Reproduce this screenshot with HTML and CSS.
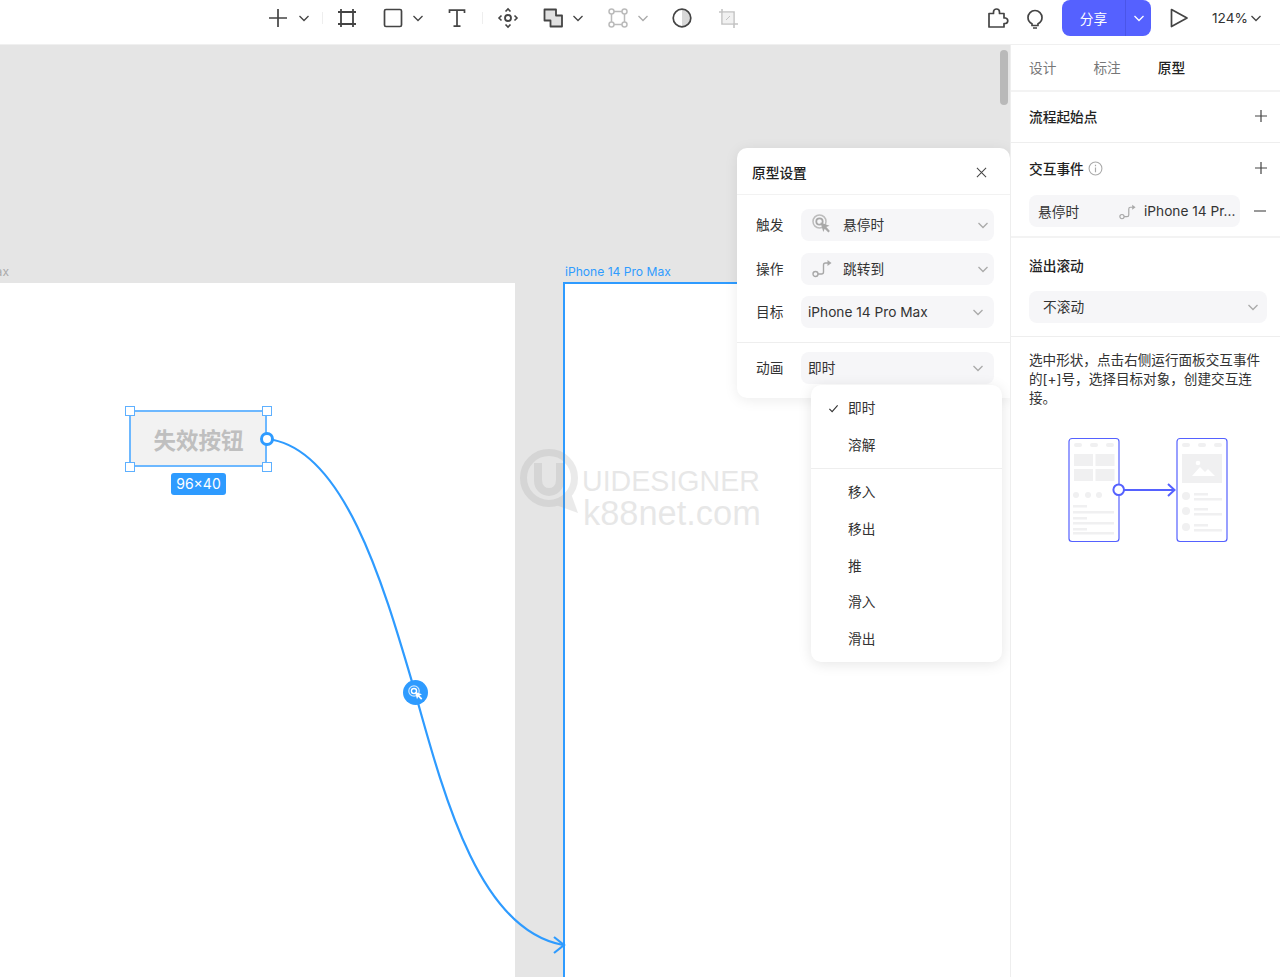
FILE: index.html
```html
<!DOCTYPE html>
<html lang="zh-CN">
<head>
<meta charset="utf-8">
<title>原型设置</title>
<link rel="stylesheet" href="styles.css">
</head>
<body>
<svg class="defs" width="0" height="0" aria-hidden="true">
  <symbol id="chev" viewBox="0 0 12 12"><path d="M1.5 4l4.5 4.5L10.500 4" fill="none" stroke="currentColor" stroke-width="1.300"/></symbol>
  <symbol id="hover" viewBox="0 0 20 20"><circle cx="7.500" cy="7.500" r="6.500" fill="none" stroke="currentColor" stroke-width="1.500" opacity=".75"/><circle cx="7.500" cy="7.500" r="3.200" fill="none" stroke="currentColor" stroke-width="1.800"/><path d="M8.500 8.500l9 3.200-3.200 1.400 3.600 3.800-1.500 1.500-3.700-3.700-1.400 3.200z" fill="currentColor"/></symbol>
  <symbol id="jump" viewBox="0 0 20 20"><circle cx="3.500" cy="16" r="2.500" fill="none" stroke="currentColor" stroke-width="1.400"/><path d="M6 16h3.500c1.500 0 2-.8 2-2V7c0-1.200.6-2 2-2H16" fill="none" stroke="currentColor" stroke-width="1.400"/><path d="M15.500 2l4 3-4 3z" fill="currentColor"/></symbol>
</svg>

<header class="topbar">
  <div class="tools">
    <svg class="ico plus" viewBox="0 0 24 24"><path d="M12 3v18M3 12h18" fill="none" stroke="#444" stroke-width="1.700"/></svg>
    <svg class="chev c-a"><use href="#chev"/></svg>
    <i class="sep s-a"></i>
    <svg class="ico frame" viewBox="0 0 24 24"><path d="M6 3v18M18 3v18M3 6h18M3 18h18" fill="none" stroke="#444" stroke-width="1.800"/></svg>
    <svg class="ico rect" viewBox="0 0 24 24"><rect x="3.500" y="3.500" width="17" height="17" rx="1.500" fill="none" stroke="#444" stroke-width="1.700"/></svg>
    <svg class="chev c-b"><use href="#chev"/></svg>
    <svg class="ico type" viewBox="0 0 24 24"><path d="M4.500 7V4.200h15V7M12 4.200v16M8.500 20.200h7" fill="none" stroke="#444" stroke-width="1.700"/></svg>
    <i class="sep s-b"></i>
    <svg class="ico comp" viewBox="0 0 24 24"><circle cx="12" cy="12" r="3" fill="none" stroke="#444" stroke-width="1.800"/><path d="M9.500 5.500L12 3l2.500 2.500M9.500 18.500L12 21l2.500-2.500M5.500 9.500L3 12l2.500 2.500M18.500 9.500L21 12l-2.500 2.500" fill="none" stroke="#444" stroke-width="1.600"/></svg>
    <svg class="ico shape" viewBox="0 0 24 24"><path d="M3.500 3.500h11.500v6h6v11h-11.500v-6h-6z" fill="#e0e0e0" stroke="#444" stroke-width="1.800" stroke-linejoin="round"/></svg>
    <svg class="chev c-c"><use href="#chev"/></svg>
    <svg class="ico bool" viewBox="0 0 24 24"><path d="M6 5.500h12M6 18.500h12M5.500 6v12M18.500 6v12" fill="none" stroke="#bbb" stroke-width="1.500"/><g fill="#fff" stroke="#bbb" stroke-width="1.500"><circle cx="5.500" cy="5.500" r="2.500"/><circle cx="18.500" cy="5.500" r="2.500"/><circle cx="5.500" cy="18.500" r="2.500"/><circle cx="18.500" cy="18.500" r="2.500"/></g></svg>
    <svg class="chev c-d dim"><use href="#chev"/></svg>
    <svg class="ico contrast" viewBox="0 0 24 24"><path d="M12 3a9 9 0 0 1 0 18z" fill="#d8d8d8"/><circle cx="12" cy="12" r="8.800" fill="none" stroke="#444" stroke-width="1.700"/></svg>
    <svg class="ico crop" viewBox="0 0 24 24"><path d="M6 3v15h16M3 6h15v16" fill="none" stroke="#c4c4c4" stroke-width="1.600"/><path d="M6.800 6.800h10.400v10.400H6.800z" fill="#f1f1f1"/><path d="M10 14l4-4" stroke="#c4c4c4" stroke-width="1"/></svg>
  </div>
  <div class="actions">
    <svg class="ico puzzle" viewBox="0 0 24 24"><path d="M4 7.500h4.500V6a3 3 0 0 1 6 0v1.500H19v4.500h1.500a2.800 2.800 0 0 1 0 5.500H19V21H4z" fill="none" stroke="#444" stroke-width="1.700" stroke-linejoin="round"/></svg>
    <svg class="ico bulb" viewBox="0 0 24 24"><path d="M9 19.500v-1.800c-2.500-1.300-4-3.600-4-6.200a7 7 0 0 1 14 0c0 2.600-1.500 4.900-4 6.200v1.800zM10 22h4" fill="none" stroke="#444" stroke-width="1.700" stroke-linejoin="round"/></svg>
    <div class="share"><span class="share-text">分享</span><span class="share-arrow"><svg class="chev white"><use href="#chev"/></svg></span></div>
    <svg class="ico play" viewBox="0 0 24 24"><path d="M5.500 3.500L21 12 5.500 20.500z" fill="none" stroke="#444" stroke-width="1.700" stroke-linejoin="round"/></svg>
    <span class="zoom-val">124%</span>
    <svg class="chev c-z"><use href="#chev"/></svg>
  </div>
</header>

<main class="body">
  <section class="canvas">
    <div class="art art-left"></div>
    <div class="art art-right"></div>
    <span class="art-name name-left">iPhone 14 Pro Max</span>
    <span class="art-name name-right">iPhone 14 Pro Max</span>

    <div class="watermark">
      <svg class="wm-logo" viewBox="0 0 66 66"><circle cx="30" cy="30" r="25.500" fill="none" stroke="#888" stroke-width="7"/><path d="M19 15v17c0 16 22 16 22 0V15" fill="none" stroke="#888" stroke-width="8"/><path d="M50 40l9 25-22-8z" fill="#888"/></svg>
      <div class="wm-text"><span class="wm-a">UIDESIGNER</span><span class="wm-b">k88net.com</span></div>
    </div>

    <svg class="wires" viewBox="0 0 1010 932" width="1010" height="932">
      <path d="M267 394C345 402 385 545 415 647C445 755 480 885 563 900" fill="none" stroke="#2e9bff" stroke-width="2.200"/>
      <path d="M554 892l10 8-10 8" fill="none" stroke="#2e9bff" stroke-width="2.200"/>
    </svg>

    <div class="selected"><span>失效按钮</span></div>
    <i class="handle h-tl"></i><i class="handle h-tr"></i><i class="handle h-bl"></i><i class="handle h-br"></i>
    <i class="port"></i>
    <div class="size">96×40</div>
    <div class="node"><svg class="node-ico"><use href="#hover"/></svg></div>
    <div class="scroll"></div>

    <div class="popup">
      <div class="pop-head"><b>原型设置</b>
        <svg class="close" viewBox="0 0 12 12"><path d="M1 1l10 10M11 1L1 11" stroke="#444" stroke-width="1.100" fill="none"/></svg>
      </div>
      <div class="pop-sec">
        <div class="row"><label>触发</label><div class="sel"><svg class="sel-ico"><use href="#hover"/></svg><span class="tx">悬停时</span><svg class="chev dim end-a"><use href="#chev"/></svg></div></div>
        <div class="row"><label>操作</label><div class="sel"><svg class="sel-ico"><use href="#jump"/></svg><span class="tx">跳转到</span><svg class="chev dim end-a"><use href="#chev"/></svg></div></div>
        <div class="row"><label>目标</label><div class="sel plain"><span>iPhone 14 Pro Max</span><svg class="chev dim end-b"><use href="#chev"/></svg></div></div>
      </div>
      <div class="pop-sec last">
        <div class="row"><label>动画</label><div class="sel plain"><span class="tx">即时</span><svg class="chev dim end-b"><use href="#chev"/></svg></div></div>
      </div>
    </div>

    <div class="menu">
      <div class="item"><svg class="check" viewBox="0 0 12 12"><path d="M1.500 6.500l3 3 6-7" fill="none" stroke="#333" stroke-width="1.200"/></svg>即时</div>
      <div class="item">溶解</div>
      <hr class="menu-line">
      <div class="item">移入</div>
      <div class="item">移出</div>
      <div class="item">推</div>
      <div class="item">滑入</div>
      <div class="item">滑出</div>
    </div>
  </section>

  <aside class="panel">
    <nav class="tabs"><span>设计</span><span>标注</span><span class="on">原型</span></nav>
    <div class="sec sec-flow">
      <h3>流程起始点</h3>
      <svg class="add" viewBox="0 0 12 12"><path d="M6 0v12M0 6h12" stroke="#444" stroke-width="1.200"/></svg>
    </div>
    <div class="sec-events">
      <div class="sec-top">
        <h3>交互事件</h3>
        <svg class="info" viewBox="0 0 14 14"><circle cx="7" cy="7" r="6" fill="none" stroke="#aaa"/><path d="M7 6v4.500M7 3.500v1.300" stroke="#aaa" stroke-width="1.100"/></svg>
        <svg class="add" viewBox="0 0 12 12"><path d="M6 0v12M0 6h12" stroke="#444" stroke-width="1.200"/></svg>
      </div>
      <div class="event-row">
        <div class="event"><span class="ev-name">悬停时</span><svg class="ev-ico"><use href="#jump"/></svg><span class="ev-target">iPhone 14 Pr...</span></div>
        <svg class="minus" viewBox="0 0 12 2"><path d="M0 1h12" stroke="#555" stroke-width="1.200"/></svg>
      </div>
    </div>
    <div class="sec-overflow">
      <h3>溢出滚动</h3>
      <div class="over-sel"><span class="tx">不滚动</span><svg class="chev dim"><use href="#chev"/></svg></div>
    </div>
    <p class="help">选中形状，点击右侧运行面板交互事件的[+]号，选择目标对象，创建交互连接。</p>
    <svg class="illus" viewBox="0 0 180 120" width="180" height="120">
      <g fill="#f0f0f1">
        <rect x="14" y="13" width="8" height="4" rx="2"/><rect x="30" y="13" width="8" height="4" rx="2"/><rect x="46" y="13" width="8" height="4" rx="2"/>
        <rect x="14" y="24" width="19" height="12"/><rect x="35.500" y="24" width="19" height="12"/><rect x="14" y="39" width="19" height="12"/><rect x="35.500" y="39" width="19" height="12"/>
        <circle cx="16" cy="65" r="3"/><circle cx="28" cy="65" r="3"/><circle cx="39" cy="65" r="3"/>
        <rect x="13" y="75" width="14" height="2.500"/><rect x="13" y="81" width="41" height="2.500"/><rect x="13" y="87" width="14" height="2.500"/><rect x="13" y="92" width="41" height="2.500"/><rect x="13" y="98" width="14" height="2.500"/><rect x="13" y="102" width="41" height="2.500"/>
        <rect x="122" y="13" width="8" height="4" rx="2"/><rect x="138" y="13" width="8" height="4" rx="2"/><rect x="154" y="13" width="8" height="4" rx="2"/>
        <rect x="122" y="24" width="40" height="29"/>
        <circle cx="126" cy="66" r="4"/><circle cx="126" cy="81" r="4"/><circle cx="126" cy="97" r="4"/>
        <rect x="134" y="63" width="14" height="2.500"/><rect x="134" y="68" width="28" height="2.500"/><rect x="134" y="78" width="14" height="2.500"/><rect x="134" y="83" width="28" height="2.500"/><rect x="134" y="94" width="14" height="2.500"/><rect x="134" y="99" width="28" height="2.500"/>
      </g>
      <path d="M132 46l8-9 5 5 3-3 7 7z" fill="#fff"/><circle cx="138" cy="33" r="2.300" fill="#fff"/>
      <g fill="none" stroke="#5561ff" stroke-width="1.200"><rect x="9" y="8.500" width="50" height="103" rx="3"/><rect x="117" y="8.500" width="50" height="103" rx="3"/></g>
      <path d="M64 60h50M108 54l6.500 6-6.500 6" fill="none" stroke="#5561ff" stroke-width="2"/>
      <circle cx="58.700" cy="59.700" r="5.300" fill="#fff" stroke="#5561ff" stroke-width="2"/>
    </svg>
  </aside>
</main>
</body>
</html>
```
FILE: styles.css
```css
* { box-sizing: border-box; }
html, body { margin: 0; height: 100%; }
body {
  width: 1280px; height: 977px; overflow: hidden; background: #fff; color: #333;
  font-family: Inter, "Noto Sans CJK SC", sans-serif; font-size: 13.7px;
}
.defs { position: absolute; }

.topbar { height: 45px; display: flex; justify-content: space-between; background: #fff; border-bottom: 1px solid #f0f0f0; }
.tools { display: flex; align-items: center; height: 36px; padding-left: 266px; }
.ico { width: 24px; height: 24px; flex: none; display: block; }
.chev { width: 12px; height: 12px; flex: none; display: block; color: #444; }
.chev.dim { color: #aaa; }
.chev.white { color: #fff; }
.sep { width: 1px; height: 12px; background: #eee; flex: none; display: block; }
.c-a { margin-left: 8px; }
.s-a { margin-left: 12px; }
.frame { margin-left: 12px; }
.rect { margin-left: 22px; }
.c-b { margin-left: 7px; }
.type { margin-left: 21px; }
.s-b { margin-left: 13px; }
.comp { margin-left: 13px; }
.shape { margin-left: 21px; }
.c-c { margin-left: 7px; }
.bool { margin-left: 22px; }
.c-d { margin-left: 7px; }
.contrast { margin-left: 21px; }
.crop { margin-left: 22px; }

.actions { display: flex; align-items: center; height: 36px; padding-right: 18px; }
.bulb { margin-left: 14px; }
.share { display: flex; width: 89px; height: 36px; margin-left: 15px; background: #5561ff; border-radius: 8px; color: #fff; overflow: hidden; }
.share-text { flex: 1; display: flex; align-items: center; justify-content: center; padding-bottom: 1px; }
.share-arrow { width: 26px; display: flex; align-items: center; justify-content: center; border-left: 1px solid #4a55e8; }
.play { margin-left: 15px; }
.zoom-val { margin-left: 22px; font-size: 13.7px; color: #333; }
.c-z { margin-left: 2px; }

.body { display: flex; height: 932px; }
.canvas { position: relative; width: 1010px; height: 932px; background: #e5e5e5; overflow: hidden; flex: none; }
.art { position: absolute; top: 238px; bottom: 0; background: #fff; }
.art-left { left: 0; width: 515px; }
.art-right { left: 563px; right: 0; top: 237px; border-top: 2px solid #2e9bff; border-left: 2px solid #2e9bff; }
.art-name { position: absolute; top: 219px; font-size: 12.100px; line-height: 16px; white-space: nowrap; }
.name-left { right: 1001px; color: #aaa; }
.name-right { left: 565px; color: #2e9bff; }

.watermark { position: absolute; left: 519px; top: 403px; display: flex; opacity: .17; pointer-events: none; }
.wm-logo { width: 66px; height: 66px; flex: none; }
.wm-text { display: flex; flex-direction: column; margin-left: -3px; padding-top: 17px; font-family: "Liberation Sans", sans-serif; color: #777; }
.wm-a { font-size: 28.600px; line-height: 33px; }
.wm-b { font-size: 34.400px; line-height: 31px; margin-left: 1px; }

.wires { position: absolute; left: 0; top: 0; }
.selected { position: absolute; left: 129px; top: 365px; width: 138px; height: 57px; background: #f2f2f2; border: 2px solid #6db8ff; display: flex; align-items: center; justify-content: center; }
.selected span { font-size: 22.500px; font-weight: 700; color: #bfbfbf; margin-left: 1px; }
.handle { position: absolute; width: 10px; height: 10px; background: #fff; border: 1.500px solid #5eb0ff; display: block; }
.h-tl { left: 125px; top: 361px; }
.h-tr { left: 262px; top: 361px; }
.h-bl { left: 125px; top: 417px; }
.h-br { left: 262px; top: 417px; }
.port { position: absolute; left: 260px; top: 387px; width: 14px; height: 14px; border-radius: 50%; background: #fff; border: 3px solid #2e9bff; display: block; }
.size { position: absolute; left: 171px; top: 428px; width: 55px; height: 22px; border-radius: 3px; background: #2e9bff; color: #fff; font-size: 14px; line-height: 22px; text-align: center; }
.node { position: absolute; left: 403px; top: 635px; width: 25px; height: 25px; border-radius: 50%; background: #2e9bff; display: flex; align-items: center; justify-content: center; }
.node-ico { width: 16px; height: 16px; color: #fff; }
.scroll { position: absolute; left: 1000px; top: 5px; width: 8px; height: 55px; border-radius: 4px; background: #b9b9b9; }

.popup { position: absolute; left: 737px; top: 103px; width: 273px; height: 250px; background: #fff; border-radius: 10px 10px 0 10px; box-shadow: 0 2px 14px rgba(0,0,0,.08); }
.pop-head { height: 47px; padding: 2px 23px 0 15px; display: flex; align-items: center; justify-content: space-between; border-bottom: 1px solid #f2f2f2; }
.pop-head b { font-weight: 500; color: #222; }
.close { width: 11px; height: 11px; }
.pop-sec { padding: 14px 16px 14px 19px; display: flex; flex-direction: column; gap: 11.500px; border-bottom: 1px solid #eee; }
.pop-sec.last { border-bottom: 0; padding-top: 9px; }
.row { display: flex; align-items: center; gap: 16px; }
.row label { width: 29px; flex: none; white-space: nowrap; padding-bottom: 2px; }
.sel { flex: 1; height: 32px; background: #f6f6f8; border-radius: 8px; display: flex; align-items: center; padding: 0 5px 0 11px; }
.sel-ico { width: 20px; height: 20px; color: #a8a8a8; flex: none; margin: 0 11px 2px 0; }
.sel span { flex: 1; white-space: nowrap; }
.sel .tx { padding-bottom: 2px; }
.sel.plain { padding-left: 7px; }
.end-b { margin-right: 5px; }

.menu { position: absolute; left: 811px; top: 340px; width: 191px; height: 277px; padding: 5px 0; background: #fff; border-radius: 10px; box-shadow: 0 2px 14px rgba(0,0,0,.1); }
.item { height: 36.700px; padding-left: 37px; line-height: 36.700px; position: relative; }
.check { position: absolute; left: 17px; top: 13px; width: 11px; height: 11px; }
.menu-line { height: 1px; margin: 5px 0; border: 0; background: #eee; }

.panel { width: 270px; flex: none; background: #fff; border-left: 1px solid #eee; }
.panel h3 { margin: 0; font-size: 13.7px; font-weight: 500; color: #222; }
.tabs { height: 47px; display: flex; gap: 37px; align-items: center; padding: 0 0 2px 18px; color: #777; border-bottom: 2px solid #f3f3f3; }
.tabs .on { color: #222; font-weight: 500; }
.sec { height: 51px; display: flex; align-items: center; justify-content: space-between; padding: 0 13px 2px 18px; border-bottom: 1px solid #eee; }
.add { width: 12px; height: 12px; flex: none; }
.sec-events { height: 95px; padding: 0 13px 0 18px; border-bottom: 2px solid #f3f3f3; }
.sec-top { display: flex; align-items: center; height: 52px; padding-bottom: 2px; }
.info { width: 15px; height: 15px; margin-left: 4px; margin-right: auto; }
.event-row { display: flex; align-items: center; justify-content: space-between; }
.event { width: 211px; height: 32px; display: flex; align-items: center; padding-left: 9px; background: #f6f6f8; border-radius: 8px; }
.ev-name { width: 81px; flex: none; }
.ev-ico { width: 17px; height: 17px; color: #a8a8a8; flex: none; margin-right: 8px; }
.ev-target { white-space: nowrap; }
.minus { width: 14px; height: 2px; }
.sec-overflow { height: 99px; padding: 18px 13px 0 18px; border-bottom: 1px solid #eee; }
.sec-overflow h3 { line-height: 20px; }
.over-sel { height: 32px; margin-top: 15px; display: flex; align-items: center; justify-content: space-between; padding: 0 8px 0 14px; background: #f6f6f8; border-radius: 8px; }
.over-sel .tx { padding-bottom: 3px; }
.help { margin: 14px 15px 0 18px; line-height: 19px; font-size: 13.600px; color: #333; }
.illus { display: block; margin: 22px 0 0 49px; }
```
